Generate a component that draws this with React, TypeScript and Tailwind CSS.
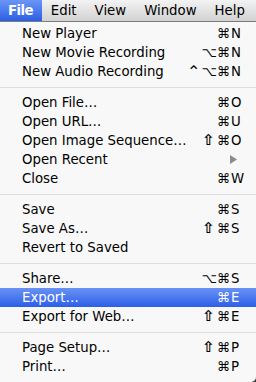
type Item = {
  label: string;
  mods?: string;
  keyChar?: string;
  submenu?: boolean;
  active?: boolean;
};

type Entry = Item | "sep";

const entries: Entry[] = [
  { label: "New Player", mods: "⌘", keyChar: "N" },
  { label: "New Movie Recording", mods: "⌥⌘", keyChar: "N" },
  { label: "New Audio Recording", mods: "⌃⌥⌘", keyChar: "N" },
  "sep",
  { label: "Open File…", mods: "⌘", keyChar: "O" },
  { label: "Open URL…", mods: "⌘", keyChar: "U" },
  { label: "Open Image Sequence…", mods: "⇧⌘", keyChar: "O" },
  { label: "Open Recent", submenu: true },
  { label: "Close", mods: "⌘", keyChar: "W" },
  "sep",
  { label: "Save", mods: "⌘", keyChar: "S" },
  { label: "Save As…", mods: "⇧⌘", keyChar: "S" },
  { label: "Revert to Saved" },
  "sep",
  { label: "Share…", mods: "⌥⌘", keyChar: "S" },
  { label: "Export…", mods: "⌘", keyChar: "E", active: true },
  { label: "Export for Web…", mods: "⇧⌘", keyChar: "E" },
  "sep",
  { label: "Page Setup…", mods: "⇧⌘", keyChar: "P" },
  { label: "Print…", mods: "⌘", keyChar: "P" },
];

const menus = ["Edit", "View", "Window", "Help"];

// shift / control glyphs render small in DejaVu, bump them up a bit
function Mod({ ch }: { ch: string }) {
  if (ch === "⇧") return <span className="text-[15px] font-bold leading-none mr-[2px]">⇧</span>;
  if (ch === "⌃") return <span className="text-[16px] leading-none mr-[1px]">⌃</span>;
  return <span>{ch}</span>;
}

function MenuRow({ item }: { item: Item }) {
  return (
    <div
      className={`flex items-center h-[19px] pl-[22px] pr-[10px] ${
        item.active
          ? "bg-gradient-to-b from-[#6a92f4] to-[#2d5ee6] text-white"
          : "text-black"
      }`}
    >
      <span className="flex-1 whitespace-nowrap">{item.label}</span>
      {item.submenu ? (
        <span className="w-[16px] flex items-center">
          <svg width="7" height="9" viewBox="0 0 7 9">
            <path d="M0 0 L7 4.5 L0 9 Z" fill="#8c8c8c" />
          </svg>
        </span>
      ) : (
        <>
          <span className="flex items-center whitespace-nowrap">
            {item.mods?.split("").map((c, i) => <Mod key={i} ch={c} />)}
          </span>
          <span className="w-[16px] pl-[1px]">{item.keyChar}</span>
        </>
      )}
    </div>
  );
}

export default function App() {
  return (
    <div
      className="w-[256px] h-[382px] flex flex-col bg-[#3a3a3a] text-[13.3px] leading-none"
      style={{ fontFamily: '"DejaVu Sans", "Liberation Sans", sans-serif' }}
    >
      {/* Menu bar */}
      <div className="flex h-[22px] items-stretch bg-gradient-to-b from-[#f3f3f3] to-[#d2d2d2] border-b border-[#7c7c7c] text-black">
        <span className="flex items-center pl-[8px] pr-[9px] font-bold tracking-[-0.6px] text-white bg-gradient-to-b from-[#6b95f6] to-[#2a5de5]">
          File
        </span>
        {menus.map(m => (
          <span key={m} className="flex items-center px-[9px]">
            {m}
          </span>
        ))}
      </div>

      {/* Dropdown */}
      <div className="flex-1 bg-[#f8f8f8] pt-[2px] pb-[6px] rounded-br-[5px]">
        {entries.map((e, i) =>
          e === "sep" ? (
            <div key={i} className="h-[12px] flex items-center">
              <div className="w-full h-px bg-[#dedede]" />
            </div>
          ) : (
            <MenuRow key={i} item={e} />
          )
        )}
      </div>
    </div>
  );
}
